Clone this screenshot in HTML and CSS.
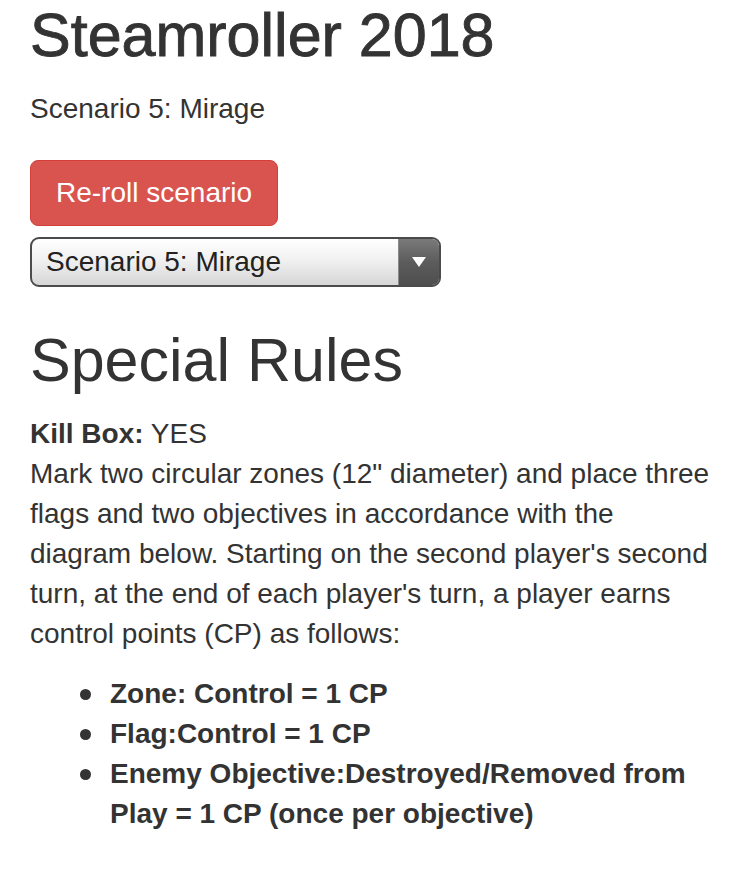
FILE: index.html
```html
<!DOCTYPE html>
<html lang="en">
<head>
<meta charset="utf-8">
<title>Steamroller 2018</title>
<link rel="stylesheet" href="styles.css">
</head>
<body>
<div class="container">
  <h1 class="title">Steamroller 2018</h1>
  <p class="subtitle">Scenario 5: Mirage</p>
  <div class="controls">
    <button class="btn btn-danger" type="button">Re-roll scenario</button>
    <div class="select">
      <span class="select-label">Scenario 5: Mirage</span>
      <span class="select-arrow">
        <svg width="16" height="12" viewBox="0 0 16 12"><polygon points="1,1 15,1 8,11" fill="#fff"/></svg>
      </span>
    </div>
  </div>
  <h1 class="section">Special Rules</h1>
  <p class="rules"><strong>Kill Box:</strong> YES<br>Mark two circular zones (12" diameter) and place three flags and two objectives in accordance with the diagram below. Starting on the second player's second turn, at the end of each player's turn, a player earns control points (CP) as follows:</p>
  <ul class="points">
    <li><strong>Zone: Control = 1 CP</strong></li>
    <li><strong>Flag:Control = 1 CP</strong></li>
    <li><strong>Enemy Objective:Destroyed/Removed from Play = 1 CP (once per objective)</strong></li>
  </ul>
</div>
</body>
</html>
```

FILE: styles.css
```css
html, body {
  margin: 0;
  padding: 0;
  background: #fff;
}

body {
  font-family: "Liberation Sans", Arial, Helvetica, sans-serif;
  font-size: 28px;
  line-height: 40px;
  color: #333;
}

.container {
  padding: 0 32px 0 30px;
}

.title,
.section {
  font-size: 61px;
  line-height: 67px;
  font-weight: 500;
  color: #333;
}

.title {
  margin: 2px 0 20px;
  -webkit-text-stroke: 0.9px #333;
}

.section {
  margin: 40px 0 20px;
}

.subtitle {
  margin: 0 0 31px;
}

.controls {
  display: flex;
  flex-direction: column;
  align-items: flex-start;
  gap: 11px;
}

.btn {
  font-family: inherit;
  font-size: 28px;
  line-height: 40px;
  padding: 12px 25px;
  border: 1px solid #d43f3a;
  border-radius: 8px;
  cursor: pointer;
}

.btn-danger {
  background: #d9534f;
  color: #fff;
}

.select {
  display: flex;
  width: 411px;
  height: 50px;
  box-sizing: border-box;
  border: 2px solid #4b4b4b;
  border-radius: 9px;
  overflow: hidden;
  background: linear-gradient(#ffffff, #f1f1f1 45%, #d6d6d6);
}

.select-label {
  flex: 1;
  padding-left: 14px;
  line-height: 46px;
  color: #222;
}

.select-arrow {
  width: 40px;
  display: flex;
  align-items: center;
  justify-content: center;
  background: linear-gradient(#7a7a7a, #5c5c5c 50%, #4e4e4e);
  border-left: 1px solid #8a8a8a;
}

.rules {
  margin: 0 0 20px;
}

.points {
  margin: 0;
  padding-left: 80px;
  list-style: none;
}

.points li {
  display: flex;
  font-weight: 700;
}

.points li::before {
  content: "";
  flex: none;
  width: 11px;
  height: 11px;
  border-radius: 50%;
  background: #333;
  margin: 15px 19px 0 -30px;
}
```
